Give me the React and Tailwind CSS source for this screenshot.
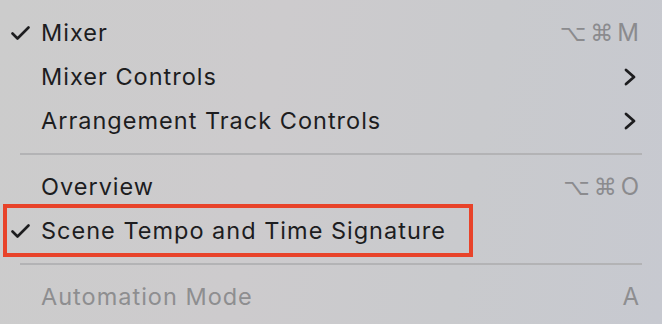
const Check = () => (
  <svg width="19" height="14" viewBox="0 0 19 14" className="text-[#1d1d1f]">
    <path d="M1.5 7.5 L6.5 12.5 L17.5 1.5" fill="none" stroke="currentColor" strokeWidth="2.6" strokeLinecap="round" strokeLinejoin="round" />
  </svg>
);

const Chevron = () => (
  <svg width="12" height="18" viewBox="0 0 12 18" className="text-[#1d1d1f]">
    <path d="M2 2 L10 9 L2 16" fill="none" stroke="currentColor" strokeWidth="2.8" strokeLinecap="round" strokeLinejoin="round" />
  </svg>
);

const Shortcut = ({ keys }) => (
  <div className="flex items-center gap-[4px] text-[#8b8b8e]">
    <span className="font-['DejaVu_Sans',sans-serif] text-[23px] leading-none">⌥</span>
    <span className="font-['DejaVu_Sans',sans-serif] text-[23px] leading-none">⌘</span>
    <span className="text-[24px] leading-none">{keys}</span>
  </div>
);

const Row = ({ checked, label, right, disabled }) => (
  <div className="flex items-center h-[44px] pl-[11px] pr-[23px]">
    <div className="w-[30px] flex items-center">{checked && <Check />}</div>
    <span className={`flex-1 text-[23.5px] tracking-[1px] leading-none ${disabled ? 'text-[#8e8e90]' : 'text-[#1d1d1f]'}`}>
      {label}
    </span>
    {right}
  </div>
);

const Separator = () => (
  <div className="h-[22px] flex items-center pl-[20px] pr-[20px]">
    <div className="h-[2px] w-full bg-[#b3b3b5]"></div>
  </div>
);

export default function App() {
  return (
    <div className="w-[662px] h-[324px] overflow-hidden relative font-['Inter',sans-serif] bg-[linear-gradient(100deg,#cccccc_0%,#cdcbcd_40%,#c9cacd_70%,#c7c9d0_100%)]">
      <div className="pt-[11px]">
        <Row checked label="Mixer" right={<Shortcut keys="M" />} />
        <Row label="Mixer Controls" right={<div className="pr-[3px]"><Chevron /></div>} />
        <Row label="Arrangement Track Controls" right={<div className="pr-[3px]"><Chevron /></div>} />
        <Separator />
        <Row label="Overview" right={<Shortcut keys="O" />} />
        <div className="relative">
          <Row checked label="Scene Tempo and Time Signature" />
          <div className="absolute left-[3px] top-[-5px] w-[470px] h-[53px] border-[4px] border-[#e8432a]"></div>
        </div>
        <Separator />
        <Row disabled label="Automation Mode" right={<span className="text-[24px] leading-none text-[#8e8e90]">A</span>} />
      </div>
    </div>
  );
}
